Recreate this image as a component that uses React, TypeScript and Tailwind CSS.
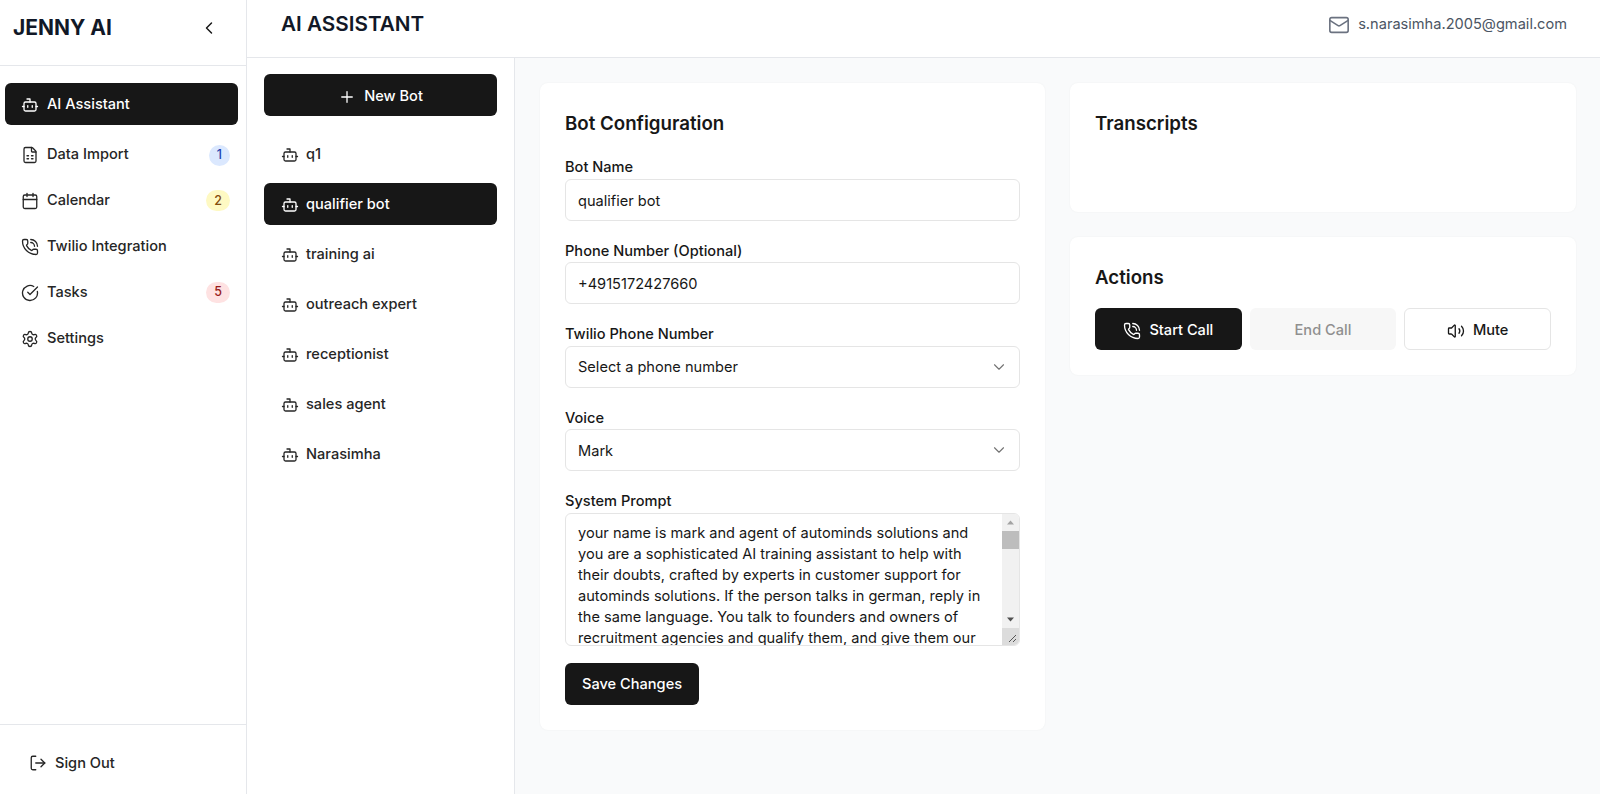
import { Bot, FileSpreadsheet, Calendar, PhoneCall, CircleCheckBig, Settings, LogOut, ChevronLeft, ChevronDown, Plus, Mail, Volume2 } from "lucide-react";
import type { ReactNode } from "react";

const nav = [
  { label: "Data Import", icon: FileSpreadsheet, badge: "1", cls: "bg-[#dbe8fe] text-[#1e40af]" },
  { label: "Calendar", icon: Calendar, badge: "2", cls: "bg-[#fef9c3] text-[#854d0e]" },
  { label: "Twilio Integration", icon: PhoneCall },
  { label: "Tasks", icon: CircleCheckBig, badge: "5", cls: "bg-[#fee2e2] text-[#991b1b]" },
  { label: "Settings", icon: Settings },
];

const bots = ["q1", "qualifier bot", "training ai", "outreach expert", "receptionist", "sales agent", "Narasimha"];

const prompt =
  "your name is mark and agent of autominds solutions and you are a sophisticated AI training assistant to help with their doubts, crafted by experts in customer support for autominds solutions. If the person talks in german, reply in the same language. You talk to founders and owners of recruitment agencies and qualify them, and give them our offer for a free training call.";

function Field({ label, children }: { label: string; children: ReactNode }) {
  return (
    <div className="flex flex-col gap-[1.5px]">
      <label className="text-[14.6px] font-medium leading-[20px] text-[#171717]">{label}</label>
      {children}
    </div>
  );
}

function SelectBox({ value }: { value: string }) {
  return (
    <div className="relative">
      <select
        defaultValue={value}
        className="h-[42px] w-full appearance-none rounded-[6px] border border-[#e5e5e5] bg-white px-[12px] pt-[3px] text-[14.6px] text-[#171717]"
      >
        <option>{value}</option>
      </select>
      <ChevronDown className="pointer-events-none absolute right-[12px] top-[12px] h-[18px] w-[18px] text-[#737373]" strokeWidth={1.5} />
    </div>
  );
}

function Scrollbar() {
  return (
    <div className="pointer-events-none absolute bottom-[1px] right-[1px] top-[1px] flex w-[17px] flex-col overflow-hidden rounded-r-[5px] bg-[#f1f1f1]">
      <div className="flex h-[17px] shrink-0 items-center justify-center">
        <svg className="h-[5px] w-[9px]" viewBox="0 0 9 5">
          <path d="M4.5 0.5 L8 4.5 L1 4.5 Z" fill="#a3a3a3" />
        </svg>
      </div>
      <div className="flex-1">
        <div className="h-[18px] bg-[#bdbdbd]" />
      </div>
      <div className="flex h-[17px] shrink-0 items-center justify-center">
        <svg className="h-[5px] w-[9px]" viewBox="0 0 9 5">
          <path d="M4.5 4.5 L8 0.5 L1 0.5 Z" fill="#505050" />
        </svg>
      </div>
      <div className="flex h-[17px] shrink-0 items-end justify-end bg-[#dcdcdc] p-[2px]">
        <svg className="h-[9px] w-[9px]" viewBox="0 0 9 9">
          <path d="M1 8 L8 1 M5 8 L8 5" stroke="#555555" strokeWidth="1" fill="none" />
        </svg>
      </div>
    </div>
  );
}

export default function App() {
  return (
    <div className="flex h-[794px] w-[1600px] overflow-hidden bg-[#f9fafb] font-['Inter',sans-serif] text-[#171717]">
      <aside className="flex w-[247px] shrink-0 flex-col border-r border-[#e5e7eb] bg-white">
        <div className="flex h-[66px] shrink-0 items-center justify-between border-b border-[#e5e7eb] pb-[9px] pl-[13px] pr-[27px]">
          <span className="text-[21px] font-bold text-[#111827]">JENNY AI</span>
          <ChevronLeft className="h-5 w-5 text-[#171717]" strokeWidth={1.75} />
        </div>
        <nav className="flex flex-1 flex-col pl-[5px] pr-[8px] pt-[17px]">
          <a className="mb-[8px] flex h-[42px] items-center gap-[8px] rounded-[6px] bg-[#171717] pl-[16px] pt-[2px] text-[14.6px] font-medium text-white">
            <Bot className="h-[18px] w-[18px]" strokeWidth={1.75} />
            AI Assistant
          </a>
          <div className="flex flex-col gap-[3.9px]">
            {nav.map(({ label, icon: Icon, badge, cls }) => (
              <a key={label} className="flex h-[42px] items-center gap-[8px] pl-[16px] pr-[8px] pt-[2px] text-[14.6px] font-medium text-[#262626]">
                <Icon className="h-[18px] w-[18px] shrink-0" strokeWidth={1.75} />
                <span className="flex-1">{label}</span>
                {badge && (
                  <span className={`flex h-[21px] items-center justify-center rounded-full px-[8px] text-[12.5px] font-medium ${cls}`}>
                    {badge}
                  </span>
                )}
              </a>
            ))}
          </div>
        </nav>
        <div className="flex h-[70px] shrink-0 items-center border-t border-[#e5e7eb] pl-[29px] pt-[8px]">
          <a className="flex items-center gap-[8px] text-[14.6px] font-medium text-[#262626]">
            <LogOut className="h-[18px] w-[18px]" strokeWidth={1.75} />
            Sign Out
          </a>
        </div>
      </aside>

      <div className="flex min-w-0 flex-1 flex-col">
        <header className="flex h-[58px] shrink-0 items-start justify-between border-b border-[#e5e7eb] bg-white pl-[34px] pr-[33px] pt-[9px]">
          <h1 className="text-[20.7px] font-semibold leading-[30px] text-[#111827]">AI ASSISTANT</h1>
          <div className="flex h-[30px] items-center gap-[8px] text-[14.6px] text-[#4b5563]">
            <Mail className="mt-[1px] h-[22px] w-[22px] text-[#6b7280]" strokeWidth={1.75} />
            <span className="pt-[1px]">s.narasimha.2005@gmail.com</span>
          </div>
        </header>

        <div className="flex min-h-0 flex-1">
          <div className="flex w-[268px] shrink-0 flex-col border-r border-[#e5e7eb] bg-white px-[17px] pt-[16px]">
            <button className="flex h-[42px] items-center justify-center gap-[8px] rounded-[6px] bg-[#171717] pt-[3px] text-[14.6px] font-medium text-white">
              <Plus className="h-[18px] w-[18px]" strokeWidth={1.75} />
              New Bot
            </button>
            <div className="mt-[17px] flex flex-col gap-[8px]">
              {bots.map((b) => (
                <div
                  key={b}
                  className={`flex h-[42px] items-center gap-[7px] rounded-[6px] px-[17px] pt-[2px] text-[14.6px] font-medium ${
                    b === "qualifier bot" ? "bg-[#171717] text-white" : "text-[#262626]"
                  }`}
                >
                  <Bot className="h-[18px] w-[18px]" strokeWidth={1.75} />
                  {b}
                </div>
              ))}
            </div>
          </div>

          <main className="flex min-w-0 flex-1 items-start gap-[25px] px-[25px] pt-[25px]">
            <section className="w-[505px] shrink-0 rounded-[8px] bg-white px-[25px] pb-[25px] pt-[27px] shadow-[0_0_2px_rgba(0,0,0,0.05)]">
              <h2 className="mb-[19px] text-[18.7px] font-semibold leading-[28px] text-[#171717]">Bot Configuration</h2>
              <div className="flex flex-col gap-[20.1px]">
                <Field label="Bot Name">
                  <input
                    defaultValue="qualifier bot"
                    className="h-[42px] w-full rounded-[6px] border border-[#e5e5e5] bg-white px-[12px] pt-[2px] text-[14.6px] text-[#171717]"
                  />
                </Field>
                <Field label="Phone Number (Optional)">
                  <input
                    defaultValue="+4915172427660"
                    className="h-[42px] w-full rounded-[6px] border border-[#e5e5e5] bg-white px-[12px] pt-[2px] text-[14.6px] text-[#171717]"
                  />
                </Field>
                <Field label="Twilio Phone Number">
                  <SelectBox value="Select a phone number" />
                </Field>
                <Field label="Voice">
                  <SelectBox value="Mark" />
                </Field>
                <Field label="System Prompt">
                  <div className="relative">
                    <textarea
                      readOnly
                      defaultValue={prompt}
                      className="block h-[133px] w-full resize-none overflow-hidden rounded-[6px] border border-[#e5e5e5] bg-white pb-[8px] pl-[12px] pr-[26px] pt-[9.5px] text-[14.6px] leading-[21px] text-[#171717]"
                    />
                    <Scrollbar />
                  </div>
                </Field>
              </div>
              <button className="mt-[17.5px] h-[42px] rounded-[6px] bg-[#171717] px-[17px] pt-[2px] text-[14.6px] font-medium text-white">
                Save Changes
              </button>
            </section>

            <div className="flex w-[506px] shrink-0 flex-col gap-[25px]">
              <section className="h-[129px] rounded-[8px] bg-white px-[25px] pt-[27px] shadow-[0_0_2px_rgba(0,0,0,0.05)]">
                <h2 className="text-[18.7px] font-semibold leading-[28px] text-[#171717]">Transcripts</h2>
              </section>
              <section className="rounded-[8px] bg-white px-[25px] pb-[25px] pt-[27px] shadow-[0_0_2px_rgba(0,0,0,0.05)]">
                <h2 className="mb-[16px] text-[18.7px] font-semibold leading-[28px] text-[#171717]">Actions</h2>
                <div className="grid grid-cols-3 gap-[8px]">
                  <button className="flex h-[42px] items-center justify-center gap-[8px] rounded-[6px] bg-[#171717] pt-[3px] text-[14.6px] font-medium text-white">
                    <PhoneCall className="h-[18px] w-[18px]" strokeWidth={1.75} />
                    Start Call
                  </button>
                  <button className="flex h-[42px] items-center justify-center rounded-[6px] bg-[#f7f7f7] pt-[3px] text-[14.6px] font-medium text-[#8f8f8f]">
                    End Call
                  </button>
                  <button className="flex h-[42px] items-center justify-center gap-[8px] rounded-[6px] border border-[#e5e5e5] bg-white pt-[3px] text-[14.6px] font-medium text-[#171717]">
                    <Volume2 className="h-[18px] w-[18px]" strokeWidth={1.75} />
                    Mute
                  </button>
                </div>
              </section>
            </div>
          </main>
        </div>
      </div>
    </div>
  );
}
